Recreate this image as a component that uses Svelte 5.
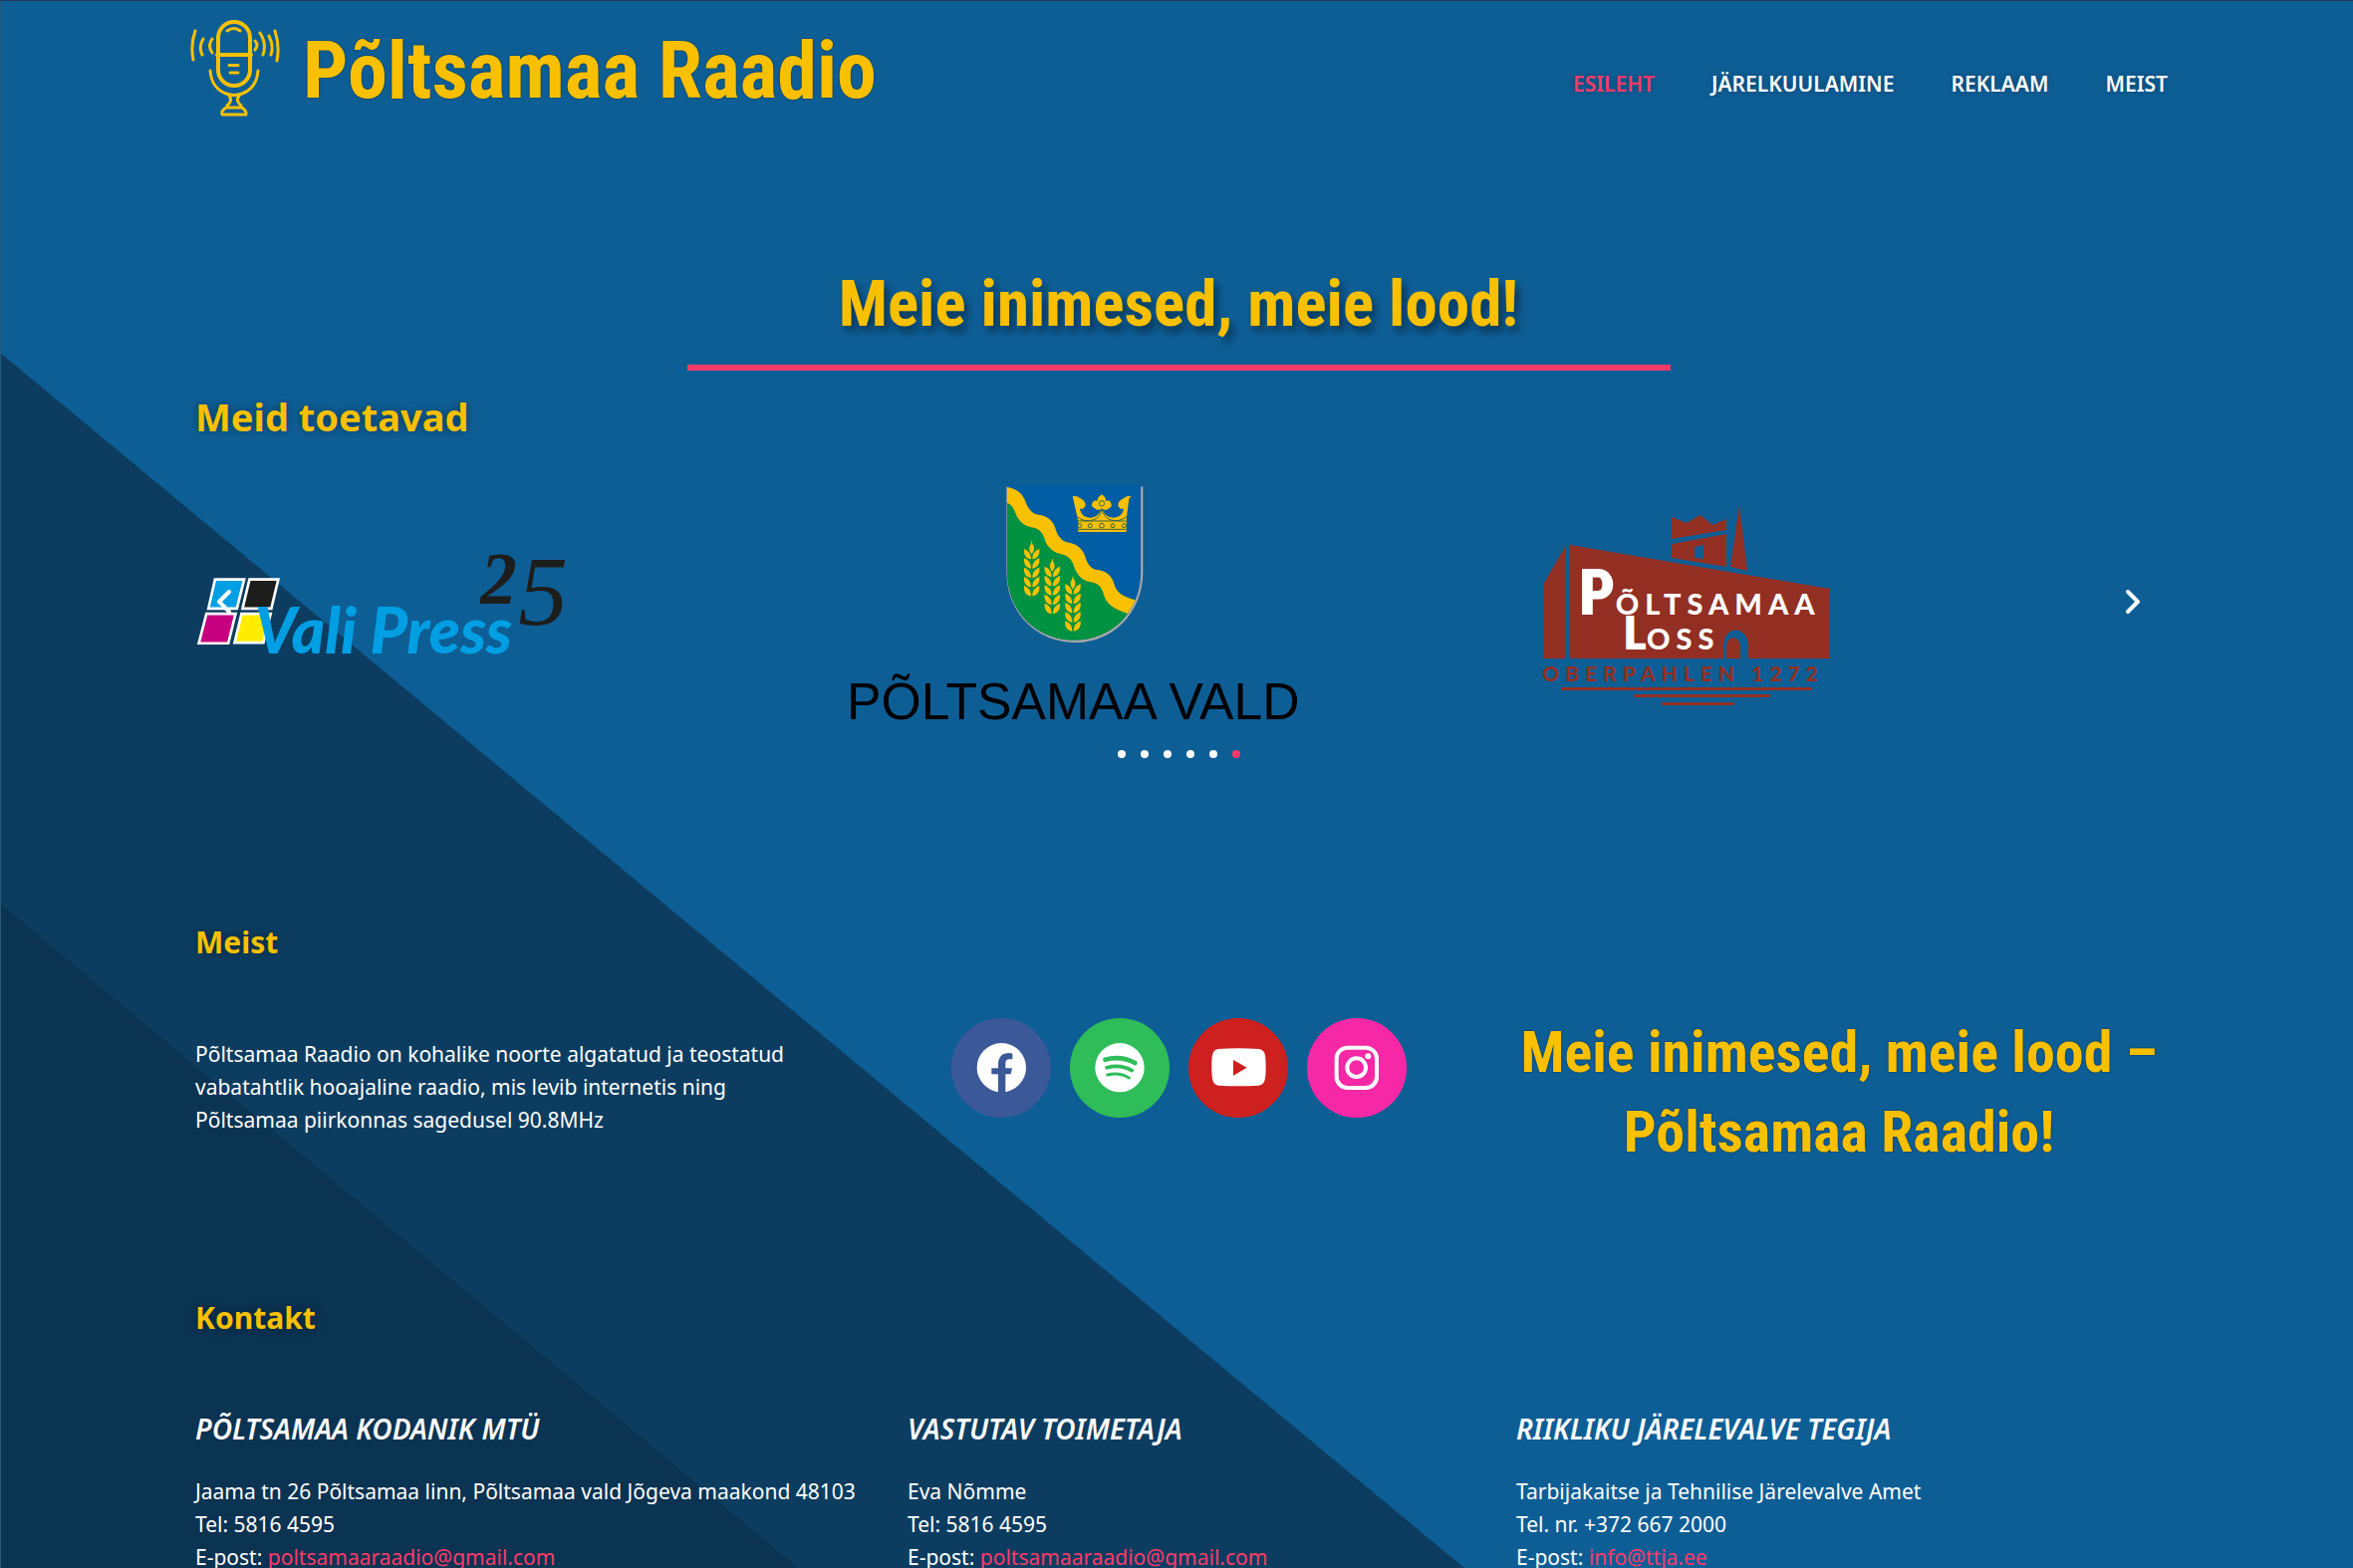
<script>
  const nav = ['Esileht', 'Järelkuulamine', 'Reklaam', 'Meist'];
  const dots = [1, 2, 3, 4, 5, 6];
  const ears = [[587, 217], [649, 270], [711, 323]];
  const rows = [27, 55, 83, 111, 138];
  const contacts = [
    {
      title: 'PÕLTSAMAA KODANIK MTÜ',
      lines: ['Jaama tn 26 Põltsamaa linn, Põltsamaa vald Jõgeva maakond 48103', 'Tel: 5816 4595'],
      email: 'poltsamaaraadio@gmail.com'
    },
    {
      title: 'VASTUTAV TOIMETAJA',
      lines: ['Eva Nõmme', 'Tel: 5816 4595'],
      email: 'poltsamaaraadio@gmail.com'
    },
    {
      title: 'RIIKLIKU JÄRELEVALVE TEGIJA',
      lines: ['Tarbijakaitse ja Tehnilise Järelevalve Amet', 'Tel. nr. +372 667 2000'],
      email: 'info@ttja.ee'
    }
  ];
</script>

<div class="page">
  <svg class="backdrop" viewBox="0 0 2362 1574" preserveAspectRatio="xMinYMin slice" aria-hidden="true">
    <path d="M0 354 L1470 1574 H0Z" fill="#0c3d60" />
    <path d="M0 907 L801 1574 H0Z" fill="#0b3352" />
  </svg>

  <header>
    <a class="brand" href="#esileht">
      <svg class="mic" viewBox="20 18 94 100" aria-hidden="true">
        <g fill="none" stroke="#f9c000" stroke-width="4" stroke-linecap="round" stroke-linejoin="round">
          <rect x="49" y="22" width="32" height="64" rx="16" />
          <path d="M48 55H82" />
          <path d="M58 31Q65 26 71 31M60 65.500H69M61 73H69" stroke-width="3" />
          <path d="M41 71C42 84 49 91 57 94Q65 97 73 94C81 91 88 84 89 71" stroke-width="3" />
          <path d="M60 96Q64 101 58 106M70 96Q66 101 72 106M57 108H73Q78 112 77 115H53Q51 112 57 108Z" stroke-width="3" />
          <path d="M26 31Q21 45 24 60M34 39Q29 47 33 55M43 39Q38 46 43 53M86 41Q90 45 86 50M91 33Q98 44 94 55M100 36Q105 46 102 55M106 31Q111 46 108 61" stroke-width="3" />
        </g>
      </svg>
      <span>Põltsamaa Raadio</span>
    </a>
    <nav>
      {#each nav as item, i}
        <a href="#{item.toLowerCase()}" class:active={i === 0}>{item}</a>
      {/each}
    </nav>
  </header>

  <main>
    <h1>Meie inimesed, meie lood!</h1>
    <hr />

    <h2 class="wide">Meid toetavad</h2>

    <section class="carousel" aria-label="Meid toetavad">
      <div class="slides">
        <div class="slide">
          <svg class="vali" viewBox="48 530 1125 310" role="img" aria-label="Vali Press 25">
            <g stroke="#fff" stroke-width="8">
              <path d="M106 601H194L172 689H86Z" fill="#009fe3" />
              <path d="M210 601H297L276 689H189Z" fill="#1d1d1b" />
              <path d="M80 705H168L146 794H57Z" fill="#c6007e" />
              <path d="M186 705H274L252 792H165Z" fill="#ffed00" />
            </g>
            <text class="vali-name" x="226" y="826">Vali Press</text>
            <text class="vali-two" x="908" y="674">2</text>
            <text class="vali-five" x="1022" y="738">5</text>
          </svg>
        </div>

        <div class="slide">
          <svg class="vald" viewBox="42 30 1356 750" role="img" aria-label="Põltsamaa vald">
            <defs>
              <clipPath id="shield">
                <path d="M513 50H916V310C916 430 830 518 716 518C600 518 513 430 513 310Z" />
              </clipPath>
            </defs>
            <path d="M511 55H922V312C922 434 832 525 720 525C600 525 511 434 511 312Z" fill="#a8a8a8" />
            <g clip-path="url(#shield)">
              <path d="M510 48H920V525H510Z" fill="#005ca3" />
              <path d="M510 103C525 110 532 118 538 135C545 155 560 173 585 178C605 180 618 190 626 213C630 230 645 252 672 258C690 262 706 268 714 295C720 315 735 338 760 342C780 345 795 350 803 378C815 425 860 428 890 445V525H510Z" fill="#009240" />
              <path d="M510 57C545 60 562 80 570 105C580 130 595 140 612 141C640 145 655 165 660 187C668 210 680 222 700 224C730 230 745 250 750 272C758 295 770 305 790 307C820 312 833 335 838 357C848 380 870 390 910 400L890 445C860 428 815 425 803 378C795 350 780 345 760 342C735 338 720 315 714 295C706 268 690 262 672 258C645 252 630 230 626 213C618 190 605 180 585 178C560 173 545 155 538 135C532 118 525 110 510 103Z" fill="#f9c000" />
            </g>
            <path d="M511 55H922V50H511Z" fill="#005ca3" />
            <g fill="#f9c000">
              {#each ears as [x, y]}
                <g transform="translate({x} {y})">
                  <path d="M0 0L2 10C10 22 8 32 0 41C-8 32 -10 22 -2 10Z" />
                  {#each rows as r}
                    <path transform="translate(0 {r})" d="M-2 30C-18 28 -25 16 -23 -1C-10 5 -2 12 -2 30ZM2 30C18 28 25 16 23 -1C10 5 2 12 2 30Z" />
                  {/each}
                </g>
              {/each}
              <path d="M710 84L724 85C734 92 748 96 749 110C746 122 738 126 732 121C734 138 744 148 762 149C780 147 792 140 796 122C788 128 780 126 777 120C768 118 766 108 770 104C772 98 780 97 786 98C784 88 790 86 798 79C806 86 811 88 809 98C816 97 824 98 825 104C829 110 828 118 820 120C816 126 808 128 800 122C804 140 816 147 834 149C852 148 862 138 864 121C858 126 849 122 847 110C848 96 864 92 873 85L887 84L880 92L872 155V192H727V160Z" />
            </g>
            <g fill="none" stroke="#37664c" stroke-width="3">
              <path d="M722 145Q745 165 775 155Q795 146 798 122Q803 146 822 155Q850 165 874 145M727 159H870M727 184H870" />
              <circle cx="798" cy="106" r="8" />
              <circle cx="731" cy="173" r="6" />
              <circle cx="763" cy="173" r="6" />
              <circle cx="798" cy="173" r="7" />
              <circle cx="831" cy="173" r="6" />
              <circle cx="865" cy="173" r="6" />
            </g>
            <text class="vald-name" x="30" y="756">PÕLTSAMAA VALD</text>
          </svg>
        </div>

        <div class="slide">
          <svg class="loss" viewBox="28 18 292 206" role="img" aria-label="Põltsamaa Loss, Oberpahlen 1272">
            <g fill="#922f22">
              <path d="M51 60V172H29V98Z" />
              <path d="M56 58L317 102V172H235V160C235 138 210 138 210 160V172H56Z" />
              <path d="M213 172V161C213 148 227 148 227 161V172Z" />
              <path d="M158 30L173 36L187 28L199 38L213 32V43L158 52Z" />
              <path d="M158 57L213 47V80L158 71Z" />
              <path d="M226 18L234 84L217 80Z" />
              <rect x="47" y="201" width="252" height="3" rx="1" />
              <rect x="120" y="208" width="137" height="3" rx="1" />
              <rect x="148" y="216" width="73" height="3" rx="1" />
            </g>
            <path d="M181 60L190 58V72L181 71Z" fill="#0e5e96" />
            <text class="loss-name" x="65" y="128"><tspan class="cap">P</tspan>ÕLTSAMAA</text>
            <text class="loss-name" x="110" y="163"><tspan class="cap low">L</tspan>OSS</text>
            <text class="loss-year" x="28" y="195">OBERPAHLEN 1272</text>
          </svg>
        </div>
      </div>

      <button class="arrow prev" aria-label="Eelmine">
        <svg viewBox="0 0 24 32" aria-hidden="true"><path d="M17 6L7 16L17 26" /></svg>
      </button>
      <button class="arrow next" aria-label="Järgmine">
        <svg viewBox="0 0 24 32" aria-hidden="true"><path d="M7 6L17 16L7 26" /></svg>
      </button>

      <div class="dots">
        {#each dots as n}
          <button class:current={n === 6} aria-label="Slaid {n}"></button>
        {/each}
      </div>
    </section>

    <h2 class="about-title">Meist</h2>
    <section class="about">
      <p>Põltsamaa Raadio on kohalike noorte algatatud ja teostatud vabatahtlik hooajaline raadio, mis levib internetis ning Põltsamaa piirkonnas sagedusel 90.8MHz</p>
      <div class="social">
        <a class="facebook" href="#facebook" aria-label="Facebook">
          <svg viewBox="0 0 300 300" aria-hidden="true">
            <circle cx="151" cy="149" r="74" fill="#fff" />
            <path d="M141 226V169H121V151H141V141C141 115 154 105 174 105Q180 105 184 107V124H176C166 124 163 129 163 138V151H183L179 169H163V226Z" fill="#3b5998" />
          </svg>
        </a>
        <a class="spotify" href="#spotify" aria-label="Spotify">
          <svg viewBox="0 0 300 300" aria-hidden="true">
            <circle cx="150" cy="149" r="74" fill="#fff" />
            <g fill="none" stroke="#2ebd59" stroke-linecap="round">
              <path d="M106 125Q155 112 196 135" stroke-width="14" />
              <path d="M111 149Q153 138 187 158" stroke-width="11" />
              <path d="M113 171Q150 162 178 180" stroke-width="9" />
            </g>
          </svg>
        </a>
        <a class="youtube" href="#youtube" aria-label="YouTube">
          <svg viewBox="0 0 300 300" aria-hidden="true">
            <path d="M70 148C70 125 71 112 74 105Q78 95 90 93Q150 89 212 93Q224 95 229 105C232 114 233 128 233 148C233 168 232 181 229 190Q224 201 212 203Q150 206 90 203Q78 201 74 190C71 181 70 168 70 148Z" fill="#fff" />
            <path d="M135 126V173L176 149Z" fill="#cd201f" />
          </svg>
        </a>
        <a class="instagram" href="#instagram" aria-label="Instagram">
          <svg viewBox="0 0 300 300" aria-hidden="true">
            <g fill="none" stroke="#fff" stroke-width="12">
              <rect x="89" y="89" width="121" height="121" rx="33" />
              <circle cx="149" cy="149" r="28" />
            </g>
            <circle cx="184" cy="115" r="9" fill="#fff" />
          </svg>
        </a>
      </div>
      <div class="slogan">Meie inimesed, meie lood – Põltsamaa Raadio!</div>
    </section>

    <h2 class="contact-title">Kontakt</h2>
    <section class="contacts">
      {#each contacts as c}
        <address>
          <h3>{c.title}</h3>
          {#each c.lines as line}<div>{line}</div>{/each}
          <div>E-post: <a href="mailto:{c.email}">{c.email}</a></div>
        </address>
      {/each}
    </section>
  </main>
</div>

<style>
  :global(body) {
    margin: 0;
    background: #0e5e96;
  }
  .page {
    position: relative;
    box-sizing: border-box;
    height: 100vh;
    overflow: hidden;
    border-top: 1px solid #20384a;
    border-left: 1px solid #2c5878;
    background: #0e5e96;
    color: #fff;
    font: 450 21px/33px 'Noto Sans', 'Open Sans', sans-serif;
  }
  .backdrop {
    position: absolute;
    inset: 0;
    width: 100%;
    height: 100%;
  }
  a {
    color: inherit;
    text-decoration: none;
  }
  header {
    position: relative;
    display: flex;
    justify-content: space-between;
    align-items: center;
    padding: 17px 186px 17px 189px;
  }
  .brand {
    display: flex;
    align-items: center;
    gap: 20px;
    color: #f9c000;
    font: 700 80px/80px 'Roboto Condensed', sans-serif;
    text-shadow: 0 0 2px rgba(0, 0, 0, 0.6);
  }
  .brand span {
    padding-top: 6px;
  }
  .mic {
    width: 94px;
    height: 100px;
  }
  nav {
    display: flex;
    align-self: flex-end;
    gap: 57px;
    font-weight: 600;
    line-height: 68px;
    text-transform: uppercase;
    text-shadow: 0 0 6px rgba(0, 0, 0, 0.3);
  }
  nav .active {
    color: #fc3a6a;
  }
  main {
    position: relative;
    padding: 0 192px 0 195px;
  }
  h1,
  h2,
  h3,
  p {
    margin: 0;
  }
  h1 {
    margin-top: 130px;
    color: #f9c000;
    font: 700 65px/80px 'Roboto Condensed', sans-serif;
    text-align: center;
    text-shadow: 4px 6px 8px rgba(0, 0, 0, 0.45);
  }
  hr {
    width: 50%;
    height: 6px;
    margin: 21px auto 0;
    border: 0;
    background: #fc3a6a;
  }
  h2 {
    color: #f9c000;
    font-size: 30px;
    font-weight: 700;
    line-height: 40px;
    text-shadow: 0 0 10px rgba(0, 0, 0, 0.4);
  }
  .wide {
    margin-top: 22px;
    font-size: 38px;
    line-height: 48px;
  }
  .carousel {
    position: relative;
    padding-top: 38px;
  }
  .slides {
    display: grid;
    grid-template-columns: repeat(3, 1fr);
    align-items: center;
  }
  .slide {
    display: flex;
  }
  .slide svg {
    overflow: visible;
  }
  .vali {
    width: 375px;
    height: 103px;
    padding-top: 8px;
  }
  .vald {
    width: 452px;
    height: 250px;
  }
  .loss {
    width: 292px;
    height: 206px;
    margin-left: 36px;
    padding-top: 10px;
  }
  .vali-name {
    fill: #009fe3;
    font: italic 900 192px Lato, sans-serif;
  }
  .vali-two {
    fill: #1d1d1b;
    font: italic 700 220px 'Liberation Serif', serif;
  }
  .vali-five {
    fill: #1d1d1b;
    font: italic 400 300px 'Liberation Serif', serif;
  }
  .vald-name {
    font: 400 155px 'Liberation Sans', sans-serif;
  }
  .loss-name {
    fill: #fff;
    font: 900 29px Lato, sans-serif;
    letter-spacing: 6px;
  }
  .cap {
    font-family: 'Roboto Condensed', sans-serif;
    font-size: 64px;
    letter-spacing: 0;
  }
  .low {
    font-size: 48px;
  }
  .loss-year {
    fill: #922f22;
    font: 900 21px Lato, sans-serif;
    letter-spacing: 6px;
  }
  button {
    padding: 0;
    border: 0;
    background: none;
    cursor: pointer;
  }
  .arrow {
    position: absolute;
    top: 146px;
    width: 24px;
    height: 32px;
  }
  .arrow svg {
    display: block;
    fill: none;
    stroke: #fff;
    stroke-width: 4;
    stroke-linecap: round;
    stroke-linejoin: round;
  }
  .prev {
    left: 17px;
  }
  .next {
    right: 17px;
  }
  .dots {
    display: flex;
    justify-content: center;
    gap: 15px;
    margin-top: 23px;
  }
  .dots button {
    width: 8px;
    height: 8px;
    border-radius: 50%;
    background: #fff;
  }
  .dots .current {
    background: #fc3a6a;
  }
  .about-title {
    margin-top: 165px;
  }
  .about {
    display: grid;
    grid-template-columns: repeat(3, 1fr);
    margin-top: 50px;
  }
  .about p {
    padding: 26px 48px 0 0;
  }
  .social {
    display: flex;
    justify-content: center;
    gap: 19px;
    padding-top: 6px;
  }
  .social a {
    width: 100px;
    height: 100px;
    border-radius: 50%;
  }
  .social svg {
    display: block;
  }
  .facebook {
    background: #3b5998;
  }
  .spotify {
    background: #2ebd59;
  }
  .youtube {
    background: #cd201f;
  }
  .instagram {
    background: #f728a5;
  }
  .slogan {
    padding-left: 10px;
    color: #f9c000;
    font: 700 58px/80px 'Roboto Condensed', sans-serif;
    text-align: center;
    text-shadow: 0 0 2px rgba(0, 0, 0, 0.6);
  }
  .contact-title {
    margin-top: 127px;
  }
  .contacts {
    display: grid;
    grid-template-columns: 715fr 611fr 648fr;
    margin-top: 71px;
  }
  address {
    font-style: normal;
  }
  h3 {
    margin-bottom: 27px;
    font-size: 28px;
    font-style: italic;
    font-weight: 600;
    line-height: 40px;
  }
  address a {
    color: #fc3a6a;
    font-weight: 400;
  }
</style>
